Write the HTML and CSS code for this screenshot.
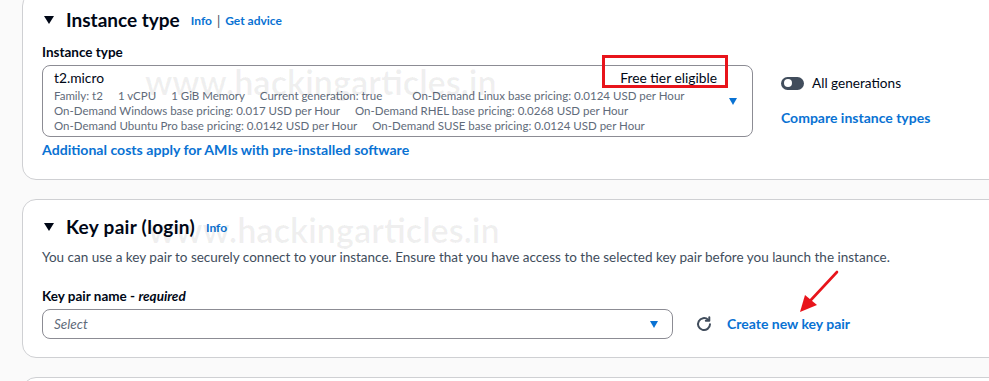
FILE: index.html
```html
<!DOCTYPE html>
<html lang="en">
<head>
<meta charset="utf-8">
<title>Launch instance</title>
<link rel="stylesheet" href="styles.css">
</head>
<body>
<div class="page">
  <section class="card card-first">
    <div class="card-head">
      <span class="tri"></span>
      <h2 class="card-title">Instance type</h2>
      <a class="info">Info</a>
      <span class="sep">|</span>
      <a class="info">Get advice</a>
    </div>
    <div class="field-label">Instance type</div>
    <div class="row row-instance">
      <div class="select select-tall">
        <div class="opt-main">
          <span class="opt-title">t2.micro</span>
          <span class="opt-tag">Free tier eligible<span class="red-box"></span></span>
        </div>
        <div class="opt-detail">
          <div class="detail-line"><span>Family: t2</span><span>1 vCPU</span><span>1 GiB Memory</span><span>Current generation: true</span><span class="wide-gap">On-Demand Linux base pricing: 0.0124 USD per Hour</span></div>
          <div class="detail-line"><span>On-Demand Windows base pricing: 0.017 USD per Hour</span><span>On-Demand RHEL base pricing: 0.0268 USD per Hour</span></div>
          <div class="detail-line"><span>On-Demand Ubuntu Pro base pricing: 0.0142 USD per Hour</span><span>On-Demand SUSE base pricing: 0.0124 USD per Hour</span></div>
        </div>
        <span class="caret caret-tall"></span>
      </div>
      <div class="side">
        <div class="toggle-row"><span class="toggle"><span class="knob"></span></span><span>All generations</span></div>
        <a class="link-bold compare">Compare instance types</a>
      </div>
    </div>
    <a class="link-bold extra">Additional costs apply for AMIs with pre-installed software</a>
  </section>

  <section class="card card-second">
    <div class="card-head">
      <span class="tri"></span>
      <h2 class="card-title">Key pair (login)</h2>
      <a class="info">Info</a>
    </div>
    <p class="desc">You can use a key pair to securely connect to your instance. Ensure that you have access to the selected key pair before you launch the instance.</p>
    <div class="field-label label-key">Key pair name - <em>required</em></div>
    <div class="row row-key">
      <div class="select select-key">
        <span class="placeholder">Select</span>
        <span class="caret"></span>
      </div>
      <svg class="refresh" viewBox="0 0 16 16" width="16" height="16" aria-hidden="true">
        <path d="M14 8.2A6 6 0 1 1 12.1 3.7" fill="none" stroke="#414d5c" stroke-width="2" stroke-linecap="round"/>
        <path d="M13.3 1.2V4.7H9.8" fill="none" stroke="#414d5c" stroke-width="2" stroke-linecap="round" stroke-linejoin="round"/>
      </svg>
      <a class="link-bold">Create new key pair</a>
    </div>
  </section>

  <section class="card card-third"></section>
</div>

<div class="watermark wm-one">www.hackingarticles.in</div>
<div class="watermark wm-two">www.hackingarticles.in</div>

<svg class="red-arrow" viewBox="0 0 44 46" width="44" height="46" aria-hidden="true">
  <line x1="40" y1="2" x2="13" y2="31" stroke="#e8141b" stroke-width="2.6" stroke-linecap="round"/>
  <polygon points="3,42 8,25 20,35" fill="#e8141b"/>
</svg>
</body>
</html>
```
FILE: styles.css
```css
html, body {
  margin: 0;
  padding: 0;
  overflow: hidden;
  background: #fafafa;
}

body {
  font-family: Lato, "Open Sans", Arial, sans-serif;
  color: #000716;
  width: 989px;
  height: 381px;
  position: relative;
}

.page {
  padding-left: 22px;
  width: 1000px;
}

.card {
  background: #ffffff;
  border: 1px solid #cfd0d3;
  border-radius: 14px;
  padding: 15px 20px 20px 19px;
}

.card-first {
  margin-top: -8px;
}

.card-second {
  margin-top: 19px;
  padding-bottom: 18px;
}

.card-third {
  margin-top: 19px;
  height: 60px;
  padding: 0;
}

.card-head {
  display: flex;
  align-items: center;
  height: 24px;
}

.tri {
  width: 0;
  height: 0;
  border-left: 5.5px solid transparent;
  border-right: 5.5px solid transparent;
  border-top: 8px solid #000716;
  margin-left: 2px;
  margin-right: 12px;
}

.card-title {
  margin: 0;
  font-size: 19px;
  font-weight: 700;
  line-height: 24px;
}

.card-second .card-title {
  letter-spacing: 0.3px;
}

.info {
  color: #0972d3;
  font-size: 12px;
  font-weight: 700;
  line-height: 24px;
  margin-left: 11px;
  padding-top: 2px;
}

.sep {
  font-size: 13px;
  color: #414d5c;
  margin-left: 5px;
  padding-top: 1px;
}

.sep + .info {
  margin-left: 5px;
}

.field-label {
  font-size: 13.5px;
  font-weight: 700;
  line-height: 18px;
  margin-top: 11px;
}

.field-label em {
  font-style: italic;
}

.row {
  display: flex;
  align-items: flex-start;
}

.row-instance {
  margin-top: 4px;
}

.select {
  position: relative;
  box-sizing: border-box;
  border: 1px solid #8c8c94;
  border-radius: 8px;
  background: #fff;
}

.select-tall {
  width: 711px;
  padding: 3px 36px 3px 11px;
}

.opt-main {
  display: flex;
  justify-content: space-between;
  line-height: 18px;
  font-size: 13.8px;
}

.opt-tag {
  position: relative;
  font-size: 13.8px;
  margin-right: -1px;
}

.red-box {
  position: absolute;
  left: -18px;
  right: -11px;
  top: -14px;
  bottom: -1px;
  border: 3px solid #e8141b;
}

.opt-detail {
  margin-top: 1px;
  font-size: 11.5px;
  line-height: 15px;
  color: #5f6b7a;
}

.detail-line {
  display: flex;
  gap: 15px;
  white-space: nowrap;
}

.wide-gap {
  margin-left: 15px;
}

.caret {
  position: absolute;
  width: 0;
  height: 0;
  border-left: 4.5px solid transparent;
  border-right: 4.5px solid transparent;
  border-top: 7px solid #0972d3;
  right: 14px;
  top: 50%;
  margin-top: -3px;
}

.caret-tall {
  right: 15px;
}

.side {
  margin-left: 28px;
  padding-top: 9px;
  display: flex;
  flex-direction: column;
}

.toggle-row {
  display: flex;
  align-items: center;
  gap: 8px;
  font-size: 13.6px;
  line-height: 18px;
}

.toggle {
  display: inline-block;
  width: 23px;
  height: 13px;
  border-radius: 7px;
  background: #414d5c;
  position: relative;
}

.knob {
  position: absolute;
  left: 3px;
  top: 2.5px;
  width: 8px;
  height: 8px;
  border-radius: 50%;
  background: #fff;
}

.link-bold {
  color: #0972d3;
  font-weight: 700;
  font-size: 14px;
  line-height: 18px;
  display: block;
}

.compare {
  margin-top: 17px;
}

.extra {
  margin-top: 4px;
  font-size: 14.1px;
}

.desc {
  margin: 9px 0 0;
  font-size: 13.5px;
  line-height: 18px;
  color: #414d5c;
  white-space: nowrap;
}

.label-key {
  margin-top: 21px;
}

.row-key {
  margin-top: 4px;
  align-items: center;
}

.select-key {
  width: 631px;
  height: 30px;
  padding: 0 11px;
  display: flex;
  align-items: center;
}

.placeholder {
  font-style: italic;
  color: #5f6b7a;
  font-size: 13.5px;
}

.select-key .caret {
  right: 14px;
}

.refresh {
  margin-left: 23px;
  flex: none;
}

.row-key .link-bold {
  margin-left: 15px;
}

.watermark {
  position: absolute;
  font-family: Lato, "Open Sans", sans-serif;
  font-weight: 700;
  font-size: 34px;
  line-height: 40px;
  color: rgba(0, 0, 0, 0.06);
  white-space: nowrap;
  pointer-events: none;
}

.wm-one {
  left: 145px;
  top: 62px;
}

.wm-two {
  left: 148px;
  top: 210px;
}

.red-arrow {
  position: absolute;
  left: 797px;
  top: 270px;
}
```
